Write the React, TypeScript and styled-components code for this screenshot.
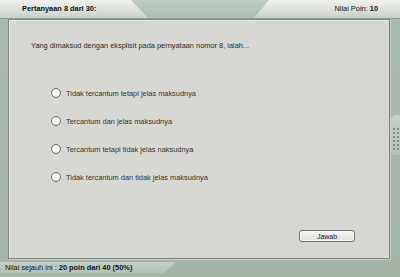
import React from 'react';
import styled, { createGlobalStyle } from 'styled-components';

const GlobalStyle = createGlobalStyle`
  html, body {
    margin: 0;
    padding: 0;
    background: #a6b9aa;
  }
  body {
    font-family: "Liberation Sans", Arial, sans-serif;
  }
`

const Frame = styled.div`
  width: 400px;
  height: 277px;
  display: flex;
  flex-direction: column;
  background: linear-gradient(180deg, #a9bcac 0%, #a2b6a6 100%);
  overflow: hidden;
`

const HeaderBar = styled.div`
  height: 18px;
  display: flex;
  justify-content: space-between;
  background: linear-gradient(180deg, #c2cfc4 0%, #a9bcad 100%);
  border-bottom: 1px solid #8e9c92;
`

const Tab = styled.div<{ side: 'left' | 'right' }>`
  width: ${p => (p.side === 'left' ? 148 : 146)}px;
  height: 100%;
  display: flex;
  align-items: center;
  justify-content: ${p => (p.side === 'left' ? 'flex-start' : 'flex-end')};
  box-sizing: border-box;
  padding: ${p => (p.side === 'left' ? '0 0 2px 22px' : '0 22px 2px 0')};
  background: linear-gradient(180deg, #eef0ec 0%, #dfe3de 45%, #c7d0c8 100%);
  clip-path: ${p =>
    p.side === 'left'
      ? 'polygon(0 0, 131px 0, 148px 100%, 0 100%)'
      : 'polygon(15px 0, 100% 0, 100% 100%, 0 100%)'};
  font-size: 7.4px;
  color: #111;
`

const Bold = styled.b`
  font-weight: bold;
`

const Middle = styled.div`
  display: flex;
  flex: 1;
`

const Gutter = styled.div<{ w: number }>`
  width: ${p => p.w}px;
  display: flex;
  flex-direction: column;
  justify-content: center;
  align-items: flex-end;
`

const Grip = styled.div`
  width: 9px;
  height: 40px;
  margin-top: -12px;
  background: linear-gradient(180deg, #c9d0ca 0%, #b4beb6 100%);
  border-radius: 5px 0 0 0;
  display: grid;
  grid-template-columns: repeat(2, 2px);
  grid-auto-rows: 2px;
  gap: 2px;
  align-content: center;
  justify-content: center;
  padding-top: 8px;
  box-sizing: border-box;
`

const Dot = styled.span`
  background: #7f8a82;
`

const Panel = styled.div`
  flex: 1;
  position: relative;
  background: #d6d7d1;
  border: 1px solid #7e847f;
  box-shadow: inset 1px 1px 0 #eceeea, 1px 1px 0 #c7ccc7;
  display: flex;
  flex-direction: column;
  padding: 21px 34px 16px 22px;
  box-sizing: border-box;
  margin-bottom: 3px;
`

const Question = styled.div`
  font-size: 7.4px;
  color: #2a2a2a;
  margin-bottom: 38px;
`

const Options = styled.div`
  display: flex;
  flex-direction: column;
  gap: 18px;
  padding-left: 20px;
`

const Option = styled.label`
  display: flex;
  align-items: center;
  gap: 5px;
  height: 10px;
  font-size: 7.4px;
  color: #333;
`

const Radio = styled.span`
  width: 8px;
  height: 8px;
  border-radius: 50%;
  border: 1px solid #6f7470;
  background: radial-gradient(circle at 40% 35%, #ffffff 0%, #eef0ee 60%, #d5d8d5 100%);
  box-sizing: content-box;
`

const Actions = styled.div`
  margin-top: auto;
  display: flex;
  justify-content: flex-end;
`

const Button = styled.button`
  width: 56px;
  height: 12px;
  padding: 0;
  border: 1px solid #6e736f;
  border-radius: 3px;
  background: linear-gradient(180deg, #f3f4f2 0%, #dfe1dd 100%);
  box-shadow: inset 0 0 0 1px #fafafa;
  font-family: "Liberation Sans", Arial, sans-serif;
  font-size: 7px;
  color: #222;
`

const Footer = styled.div`
  height: 15px;
  display: flex;
  align-items: flex-start;
`

const FooterTab = styled.div`
  width: 176px;
  height: 11px;
  display: flex;
  align-items: center;
  padding-left: 5px;
  box-sizing: border-box;
  background: linear-gradient(180deg, #c3cec5 0%, #b4c2b7 100%);
  clip-path: polygon(0 0, 176px 0, 164px 100%, 0 100%);
  font-size: 7.4px;
  color: #111;
  white-space: nowrap;
`

const options = [
  'Tidak tercantum tetapi jelas maksudnya',
  'Tercantum dan jelas maksudnya',
  'Tercantum tetapi tidak jelas naksudnya',
  'Tidak tercantum dan tidak jelas maksudnya',
];

export default function App() {
  return (
    <Frame>
      <GlobalStyle />
      <HeaderBar>
        <Tab side="left">
          <Bold>Pertanyaan 8 dari 30:</Bold>
        </Tab>
        <Tab side="right">
          <span>Nilai Poin: <Bold>10</Bold></span>
        </Tab>
      </HeaderBar>
      <Middle>
        <Gutter w={8} />
        <Panel>
          <Question>Yang dimaksud dengan eksplisit pada pernyataan nomor 8, ialah...</Question>
          <Options>
            {options.map(text => (
              <Option key={text}>
                <Radio />
                {text}
              </Option>
            ))}
          </Options>
          <Actions>
            <Button>Jawab</Button>
          </Actions>
        </Panel>
        <Gutter w={10}>
          <Grip>
            {Array.from({ length: 12 }).map((_, i) => (
              <Dot key={i} />
            ))}
          </Grip>
        </Gutter>
      </Middle>
      <Footer>
        <FooterTab>
          Nilai sejauh ini : <Bold>&nbsp;20 poin dari 40 (50%)</Bold>
        </FooterTab>
      </Footer>
    </Frame>
  );
}
